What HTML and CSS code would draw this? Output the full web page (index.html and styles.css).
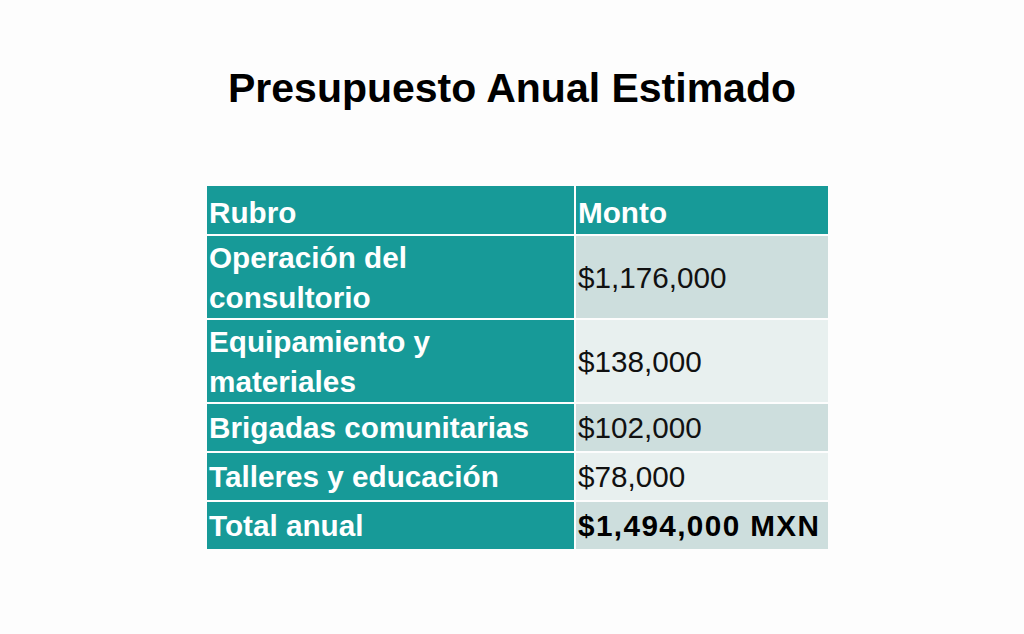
FILE: index.html
```html
<!DOCTYPE html>
<html lang="es">
<head>
<meta charset="utf-8">
<title>Presupuesto Anual Estimado</title>
<link rel="stylesheet" href="styles.css">
</head>
<body>
<main class="page">
  <h1 class="title">Presupuesto Anual Estimado</h1>
  <div class="table-wrap">
    <table class="budget">
      <colgroup><col class="col-a"><col class="col-b"></colgroup>
      <thead>
        <tr class="single head"><th>Rubro</th><th>Monto</th></tr>
      </thead>
      <tbody>
        <tr class="dark"><th>Operación del<br>consultorio</th><td>$1,176,000</td></tr>
        <tr class="light"><th>Equipamiento y<br>materiales</th><td>$138,000</td></tr>
        <tr class="dark single"><th>Brigadas comunitarias</th><td>$102,000</td></tr>
        <tr class="light single"><th>Talleres y educación</th><td>$78,000</td></tr>
        <tr class="dark single total"><th>Total anual</th><td>$1,494,000 MXN</td></tr>
      </tbody>
    </table>
  </div>
</main>
</body>
</html>
```

FILE: styles.css
```css
html, body {
  margin: 0;
  padding: 0;
  background: #fdfdfd;
}
body {
  width: 1024px;
  height: 634px;
  overflow: hidden;
  font-family: "Liberation Sans", Arial, sans-serif;
  color: #000;
}
.page {
  display: flex;
  flex-direction: column;
  padding-top: 64px;
}
.title {
  margin: 0;
  font-size: 41px;
  line-height: 48px;
  font-weight: 700;
  text-align: center;
}
.table-wrap {
  display: flex;
  justify-content: center;
  padding-left: 11px;
  margin-top: 72px;
}
.budget {
  border-collapse: separate;
  border-spacing: 2px;
  background: #fdfdfd;
  font-size: 29.7px;
  line-height: 40px;
}
.col-a { width: 367px; }
.col-b { width: 252px; }
.budget th,
.budget td {
  padding: 2px 2px 0 2px;
  text-align: left;
  vertical-align: middle;
}
.single {
  height: 47px;
}
.single th,
.single td {
  padding-top: 4px;
  padding-bottom: 3px;
}
.head th {
  padding-top: 7px;
  padding-bottom: 1px;
}
.budget th {
  background: #179a98;
  color: #fff;
  font-weight: 700;
}
.budget td {
  color: #111;
  font-weight: 400;
}
.dark td { background: #cddedd; }
.light td { background: #e8f0ef; }
.total td {
  font-weight: 700;
  color: #000;
  letter-spacing: 1.4px;
}
```
